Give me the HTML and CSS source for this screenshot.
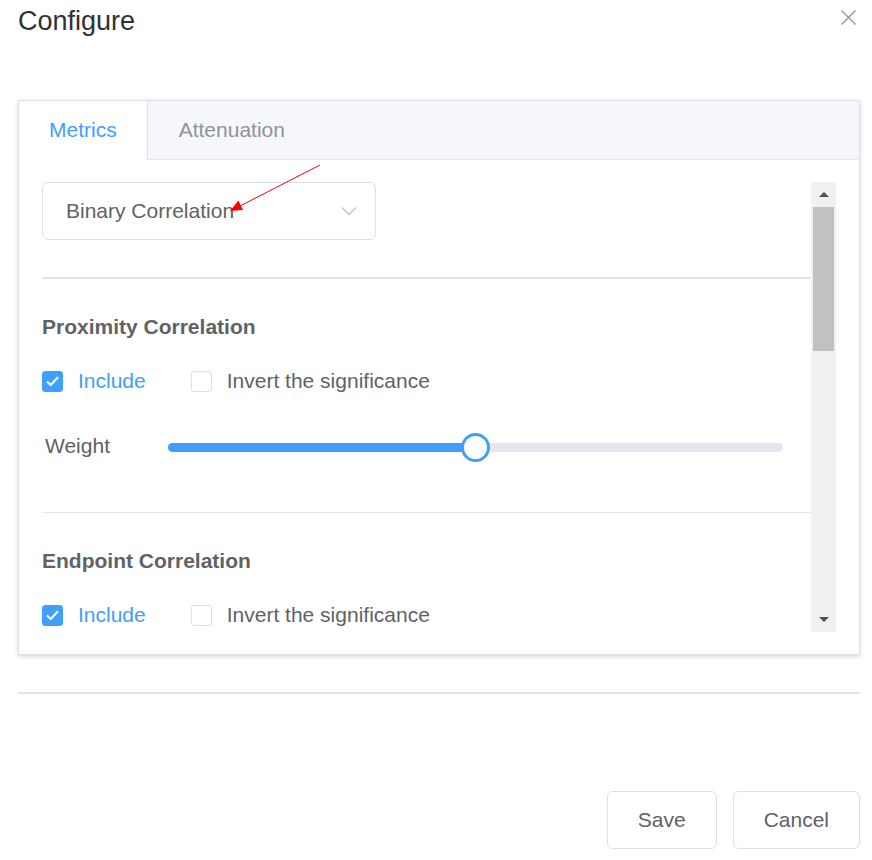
FILE: index.html
```html
<!DOCTYPE html>
<html lang="en">
<head>
<meta charset="utf-8">
<title>Configure</title>
<link rel="stylesheet" href="styles.css">
</head>
<body>
<div class="dialog">
  <header class="dlg-head">
    <h2 class="dlg-title">Configure</h2>
    <button class="dlg-close" aria-label="Close">
      <svg width="15" height="15" viewBox="0 0 15 15"><path d="M0.5 0.5 L14.5 14.5 M14.5 0.5 L0.5 14.5" stroke="#909399" stroke-width="1.3" fill="none"/></svg>
    </button>
  </header>

  <div class="card">
    <div class="tabs">
      <div class="tab active">Metrics</div>
      <div class="tab">Attenuation</div>
    </div>
    <div class="card-body">
      <div class="scroll">
        <div class="scroll-content">
          <div class="select">
            <span class="select-text">Binary Correlation</span>
            <svg class="chev" width="16" height="10" viewBox="0 0 16 10"><path d="M1 1.5 L8 8.5 L15 1.5" stroke="#c0c4cc" stroke-width="1.4" fill="none"/></svg>
          </div>
          <div class="divider thick"></div>

          <h3 class="sec-title">Proximity Correlation</h3>
          <div class="check-row">
            <label class="check on"><span class="box"><svg width="21" height="21" viewBox="0 0 21 21"><path d="M5 10.5 L8.7 14 L16 6.3" stroke="#fff" stroke-width="2" fill="none"/></svg></span><span class="lbl">Include</span></label>
            <label class="check"><span class="box"></span><span class="lbl">Invert the significance</span></label>
          </div>
          <div class="weight-row">
            <span class="w-label">Weight</span>
            <div class="slider">
              <div class="fill" style="width:50%"></div>
              <div class="thumb" style="left:50%"></div>
            </div>
          </div>
          <div class="divider thin"></div>

          <h3 class="sec-title">Endpoint Correlation</h3>
          <div class="check-row">
            <label class="check on"><span class="box"><svg width="21" height="21" viewBox="0 0 21 21"><path d="M5 10.5 L8.7 14 L16 6.3" stroke="#fff" stroke-width="2" fill="none"/></svg></span><span class="lbl">Include</span></label>
            <label class="check"><span class="box"></span><span class="lbl">Invert the significance</span></label>
          </div>
        </div>
        <div class="sb">
          <div class="sb-btn"><span class="tri up"></span></div>
          <div class="sb-thumb"></div>
          <div class="sb-space"></div>
          <div class="sb-btn"><span class="tri down"></span></div>
        </div>
      </div>
    </div>
  </div>

  <div class="rule"></div>

  <footer class="dlg-foot">
    <button class="btn">Save</button>
    <button class="btn">Cancel</button>
  </footer>

  <svg class="annot" width="872" height="860" viewBox="0 0 872 860">
    <line x1="320" y1="165" x2="239" y2="206.5" stroke="#ff0000" stroke-width="1"/>
    <polygon points="230,211 243,210 238.4,200.5" fill="#ff0000"/>
  </svg>
</div>
</body>
</html>
```

FILE: styles.css
```css
* { box-sizing: border-box; }
html, body { margin: 0; padding: 0; background: #fff; }
body {
  font-family: "Liberation Sans", Arial, Helvetica, sans-serif;
  color: #606266;
  width: 872px;
  height: 860px;
  overflow: hidden;
}
.dialog {
  position: relative;
  padding: 0 12px 0 18px;
}
.dlg-head {
  height: 100px;
  display: flex;
  justify-content: space-between;
  align-items: flex-start;
}
.dlg-title {
  margin: 0;
  padding-top: 6px;
  font-size: 27px;
  line-height: 30px;
  font-weight: normal;
  color: #303133;
}
.dlg-close {
  margin: 10px 4px 0 0;
  padding: 0;
  border: 0;
  background: none;
  width: 15px;
  height: 15px;
  display: block;
}
.dlg-close svg { display: block; }

.card {
  border: 1px solid #dcdfe6;
  background: #fff;
  box-shadow: 0 2px 4px rgba(0,0,0,.12), 0 0 6px rgba(0,0,0,.04);
}
.tabs {
  display: flex;
  height: 59px;
  background: #f5f7fa;
  border-bottom: 1px solid #e4e7ed;
}
.tab {
  height: 59px;
  line-height: 58px;
  padding: 0 30px;
  font-size: 21px;
  color: #909399;
  border-right: 1px solid transparent;
  border-left: 1px solid transparent;
}
.tab:first-child { border-left: 0; }
.tab.active {
  background: #fff;
  color: #409eff;
  border-right-color: #dcdfe6;
}
.card-body {
  padding: 22px 23px 22px 23px;
}
.scroll {
  display: flex;
  height: 450px;
}
.scroll-content {
  flex: 1;
  overflow: hidden;
}
.select {
  width: 334px;
  height: 58px;
  border: 1px solid #dcdfe6;
  border-radius: 6px;
  padding: 0 18px 0 23px;
  display: flex;
  align-items: center;
  justify-content: space-between;
  font-size: 21px;
  color: #606266;
}
.chev { display: block; }
.divider { background: #e4e7ed; }
.divider.thick { height: 2px; margin-top: 37px; background: #e0e3e9; }
.divider.thin { height: 1px; margin-top: 51px; }
.sec-title {
  margin: 33px 0 0;
  font-size: 21px;
  line-height: 30px;
  font-weight: bold;
  color: #606266;
}
.check-row {
  margin-top: 24px;
  height: 30px;
  display: flex;
  align-items: center;
  gap: 45px;
}
.check {
  display: flex;
  align-items: center;
  gap: 15px;
  font-size: 21px;
  line-height: 30px;
  color: #606266;
}
.box {
  width: 21px;
  height: 21px;
  border: 1px solid #dcdfe6;
  border-radius: 3px;
  background: #fff;
  display: block;
  position: relative;
}
.box svg { display: block; position: absolute; left: -1px; top: -1px; }
.check.on .box { background: #409eff; border-color: #409eff; }
.check.on .lbl { color: #409eff; }

.weight-row {
  margin-top: 35px;
  height: 30px;
  display: flex;
  align-items: center;
}
.w-label {
  width: 126px;
  padding-left: 3px;
  font-size: 21px;
  line-height: 30px;
  color: #606266;
}
.slider {
  position: relative;
  width: 615px;
  height: 9px;
  border-radius: 5px;
  background: #e4e7ed;
  margin-top: 2px;
}
.fill {
  height: 9px;
  border-radius: 5px 0 0 5px;
  background: #409eff;
}
.thumb {
  position: absolute;
  top: 50%;
  width: 29px;
  height: 29px;
  margin: -14.5px 0 0 -14.5px;
  border: 3px solid #409eff;
  border-radius: 50%;
  background: #fff;
}

.sb {
  width: 25px;
  background: #f1f1f1;
  display: flex;
  flex-direction: column;
}
.sb-btn {
  height: 25px;
  display: flex;
  align-items: center;
  justify-content: center;
}
.tri {
  width: 0;
  height: 0;
  border-left: 5px solid transparent;
  border-right: 5px solid transparent;
}
.tri.up { border-bottom: 5px solid #505050; }
.tri.down { border-top: 5px solid #505050; }
.sb-thumb {
  height: 144px;
  margin: 0 2px;
  background: #c1c1c1;
}
.sb-space { flex: 1; }

.rule {
  margin-top: 37px;
  height: 2px;
  background: #e2e4e9;
}
.dlg-foot {
  margin-top: 97px;
  display: flex;
  justify-content: flex-end;
  gap: 16px;
}
.btn {
  height: 58px;
  padding: 0 30px;
  border: 1px solid #dcdfe6;
  border-radius: 6px;
  background: #fff;
  font-family: "Liberation Sans", Arial, Helvetica, sans-serif;
  font-size: 21px;
  color: #606266;
}
.annot {
  position: absolute;
  left: 0;
  top: 0;
  pointer-events: none;
}
```
